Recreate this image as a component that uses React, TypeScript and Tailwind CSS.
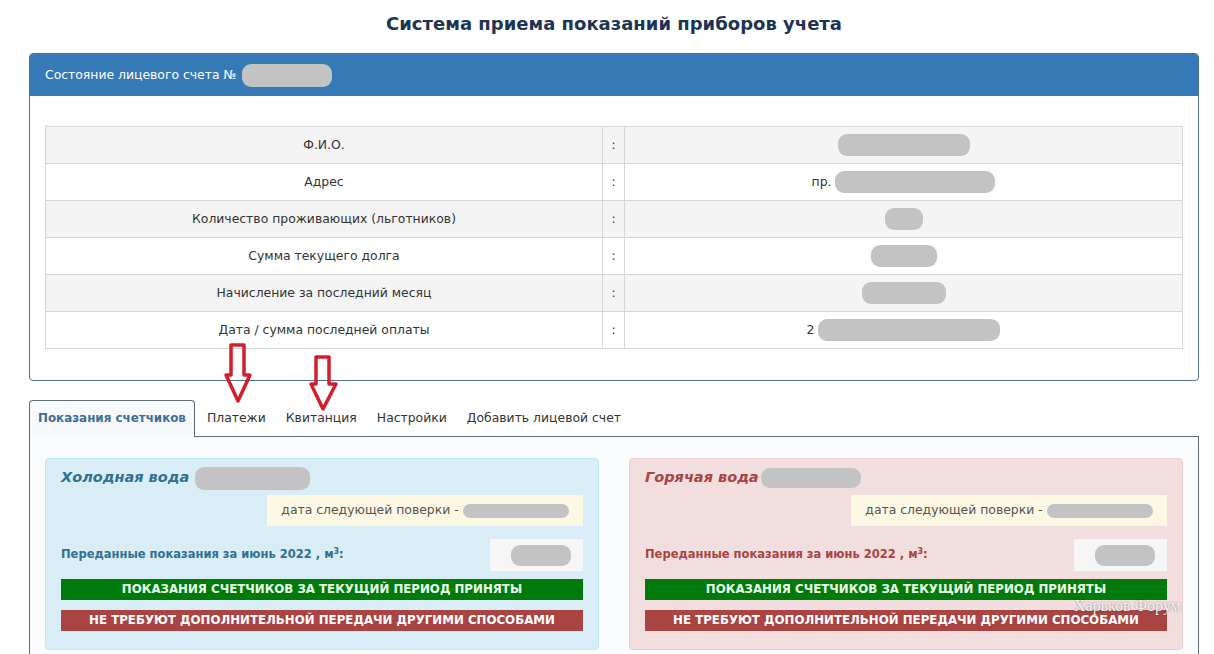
import React from "react"

const rows = [
    { label: "Ф.И.О.", prefix: "", pill: "w-[132px]" },
    { label: "Адрес", prefix: "пр.", pill: "w-[160px]" },
    { label: "Количество проживающих (льготников)", prefix: "", pill: "w-[38px]" },
    { label: "Сумма текущего долга", prefix: "", pill: "w-[66px]" },
    { label: "Начисление за последний месяц", prefix: "", pill: "w-[84px]" },
    { label: "Дата / сумма последней оплаты", prefix: "2", pill: "w-[182px]" },
]

const tabs = ["Платежи", "Квитанция", "Настройки", "Добавить лицевой счет"]

function Pill({ className }: { className: string }) {
    return <span className={"inline-block rounded-[9px] bg-[#c3c3c3] blur-[0.6px] align-middle " + className} />
}

function Meter({ hot }: { hot?: boolean }) {
    const box = hot ? "bg-[#f2dede] border-[#ebccd1]" : "bg-[#d9edf7] border-[#bce8f1]"
    const text = hot ? "text-[#a94442]" : "text-[#31708f]"
    return <div className={"border rounded-[4px] px-[15px] pt-[8px] pb-[18px] " + box}>
        <div className={"flex items-center h-[22px] italic font-bold text-[14.5px] " + text}>
            {hot ? "Горячая вода" : "Холодная вода"}
            <Pill className={hot ? "ml-[2px] w-[100px] h-[20px]" : "ml-[6px] w-[115px] h-[23px]"} />
        </div>
        <div className="flex justify-end mt-[6px]">
            <div className="w-[316px] h-[31px] bg-[#fcf8e3] flex items-center justify-center text-[12.4px] text-[#555]">
                дата следующей поверки -<Pill className="ml-[4px] w-[106px] h-[14px]" />
            </div>
        </div>
        <div className="flex items-center justify-between mt-[13px]">
            <div className={"font-bold text-[11.5px] " + text}>
                Переданные показания за июнь 2022 , м<sup className="text-[8px]">3</sup>:
            </div>
            <div className="w-[93px] h-[32px] bg-[#f6f6f6] flex items-center justify-end pr-[12px]">
                <Pill className="w-[60px] h-[21px]" />
            </div>
        </div>
        <div className="mt-[8px] h-[21px] bg-[#007a0a] text-[#eaffea] font-bold text-[11.8px] flex items-center justify-center">
            ПОКАЗАНИЯ СЧЕТЧИКОВ ЗА ТЕКУЩИЙ ПЕРИОД ПРИНЯТЫ
        </div>
        <div className="mt-[10px] h-[21px] bg-[#a94442] text-white font-bold text-[11.8px] flex items-center justify-center">
            НЕ ТРЕБУЮТ ДОПОЛНИТЕЛЬНОЙ ПЕРЕДАЧИ ДРУГИМИ СПОСОБАМИ
        </div>
    </div>
}

export default function App() {
    return <div className="relative w-[1214px] h-[654px] overflow-hidden bg-white text-[#333] font-['DejaVu_Sans',sans-serif] text-[12.4px]">
        <div className="ml-[29px] mr-[15px]">
            <h1 className="h-[53px] pt-[10px] text-center text-[18px] font-bold text-[#1d3552]">
                Система приема показаний приборов учета
            </h1>

            <div className="border border-[#4b7488] rounded-[4px] overflow-hidden">
                <div className="h-[42px] bg-[#357ab6] text-white flex items-center pl-[15px]">
                    Состояние лицевого счета №
                    <Pill className="ml-[6px] w-[90px] h-[23px]" />
                </div>
                <div className="px-[15px] pt-[30px] pb-[31px]">
                    <table className="w-full border-collapse border border-[#d6d6d6]">
                        <tbody>
                            {rows.map((r, i) => <tr key={r.label} className={i % 2 === 0 ? "bg-[#f4f4f4]" : "bg-white"}>
                                <td className="h-[37px] w-[557px] border border-[#d6d6d6] text-center">{r.label}</td>
                                <td className="w-[22px] border border-[#d6d6d6] text-center">:</td>
                                <td className="border border-[#d6d6d6] text-center">
                                    {r.prefix && <span className="mr-[4px] align-middle">{r.prefix}</span>}
                                    <Pill className={r.pill + " h-[22px]"} />
                                </td>
                            </tr>)}
                        </tbody>
                    </table>
                </div>
            </div>

            <div className="mt-[19px] flex items-end h-[37px]">
                <div className="h-[37px] px-[8px] flex items-center border border-b-0 border-[#5d6b74] rounded-t-[4px] bg-[#f7f9fb] font-bold text-[11.9px] text-[#3d6f98]">
                    Показания счетчиков
                </div>
                <div className="flex-1 h-[37px] border-b border-[#5d6b74] flex items-center gap-[20px] pl-[12px] text-[#333]">
                    {tabs.map(t => <span key={t}>{t}</span>)}
                </div>
            </div>
            <div className="border-x border-[#5d6b74] bg-[#f9fbfc] px-[15px] pt-[21px] pb-[20px] grid grid-cols-2 gap-[30px]">
                <Meter />
                <Meter hot />
            </div>
        </div>

        <svg className="absolute left-0 top-0 pointer-events-none" width="1214" height="654">
            <polygon points="231,345 244,345 244,375 250,375 238,401 226,375 231,375" fill="none" stroke="#d21f2c" strokeWidth="3.5" strokeLinejoin="round" />
            <polygon points="316,357 329,357 329,384 336,384 323,409 311,384 316,384" fill="none" stroke="#d21f2c" strokeWidth="3.5" strokeLinejoin="round" />
        </svg>
        <div className="absolute left-[1074px] top-[594px] font-['Liberation_Serif',serif] text-[16px] text-white/90 [text-shadow:0_0_2px_rgba(0,0,0,0.5)]">
            Харьков Форум
        </div>
    </div>
}
